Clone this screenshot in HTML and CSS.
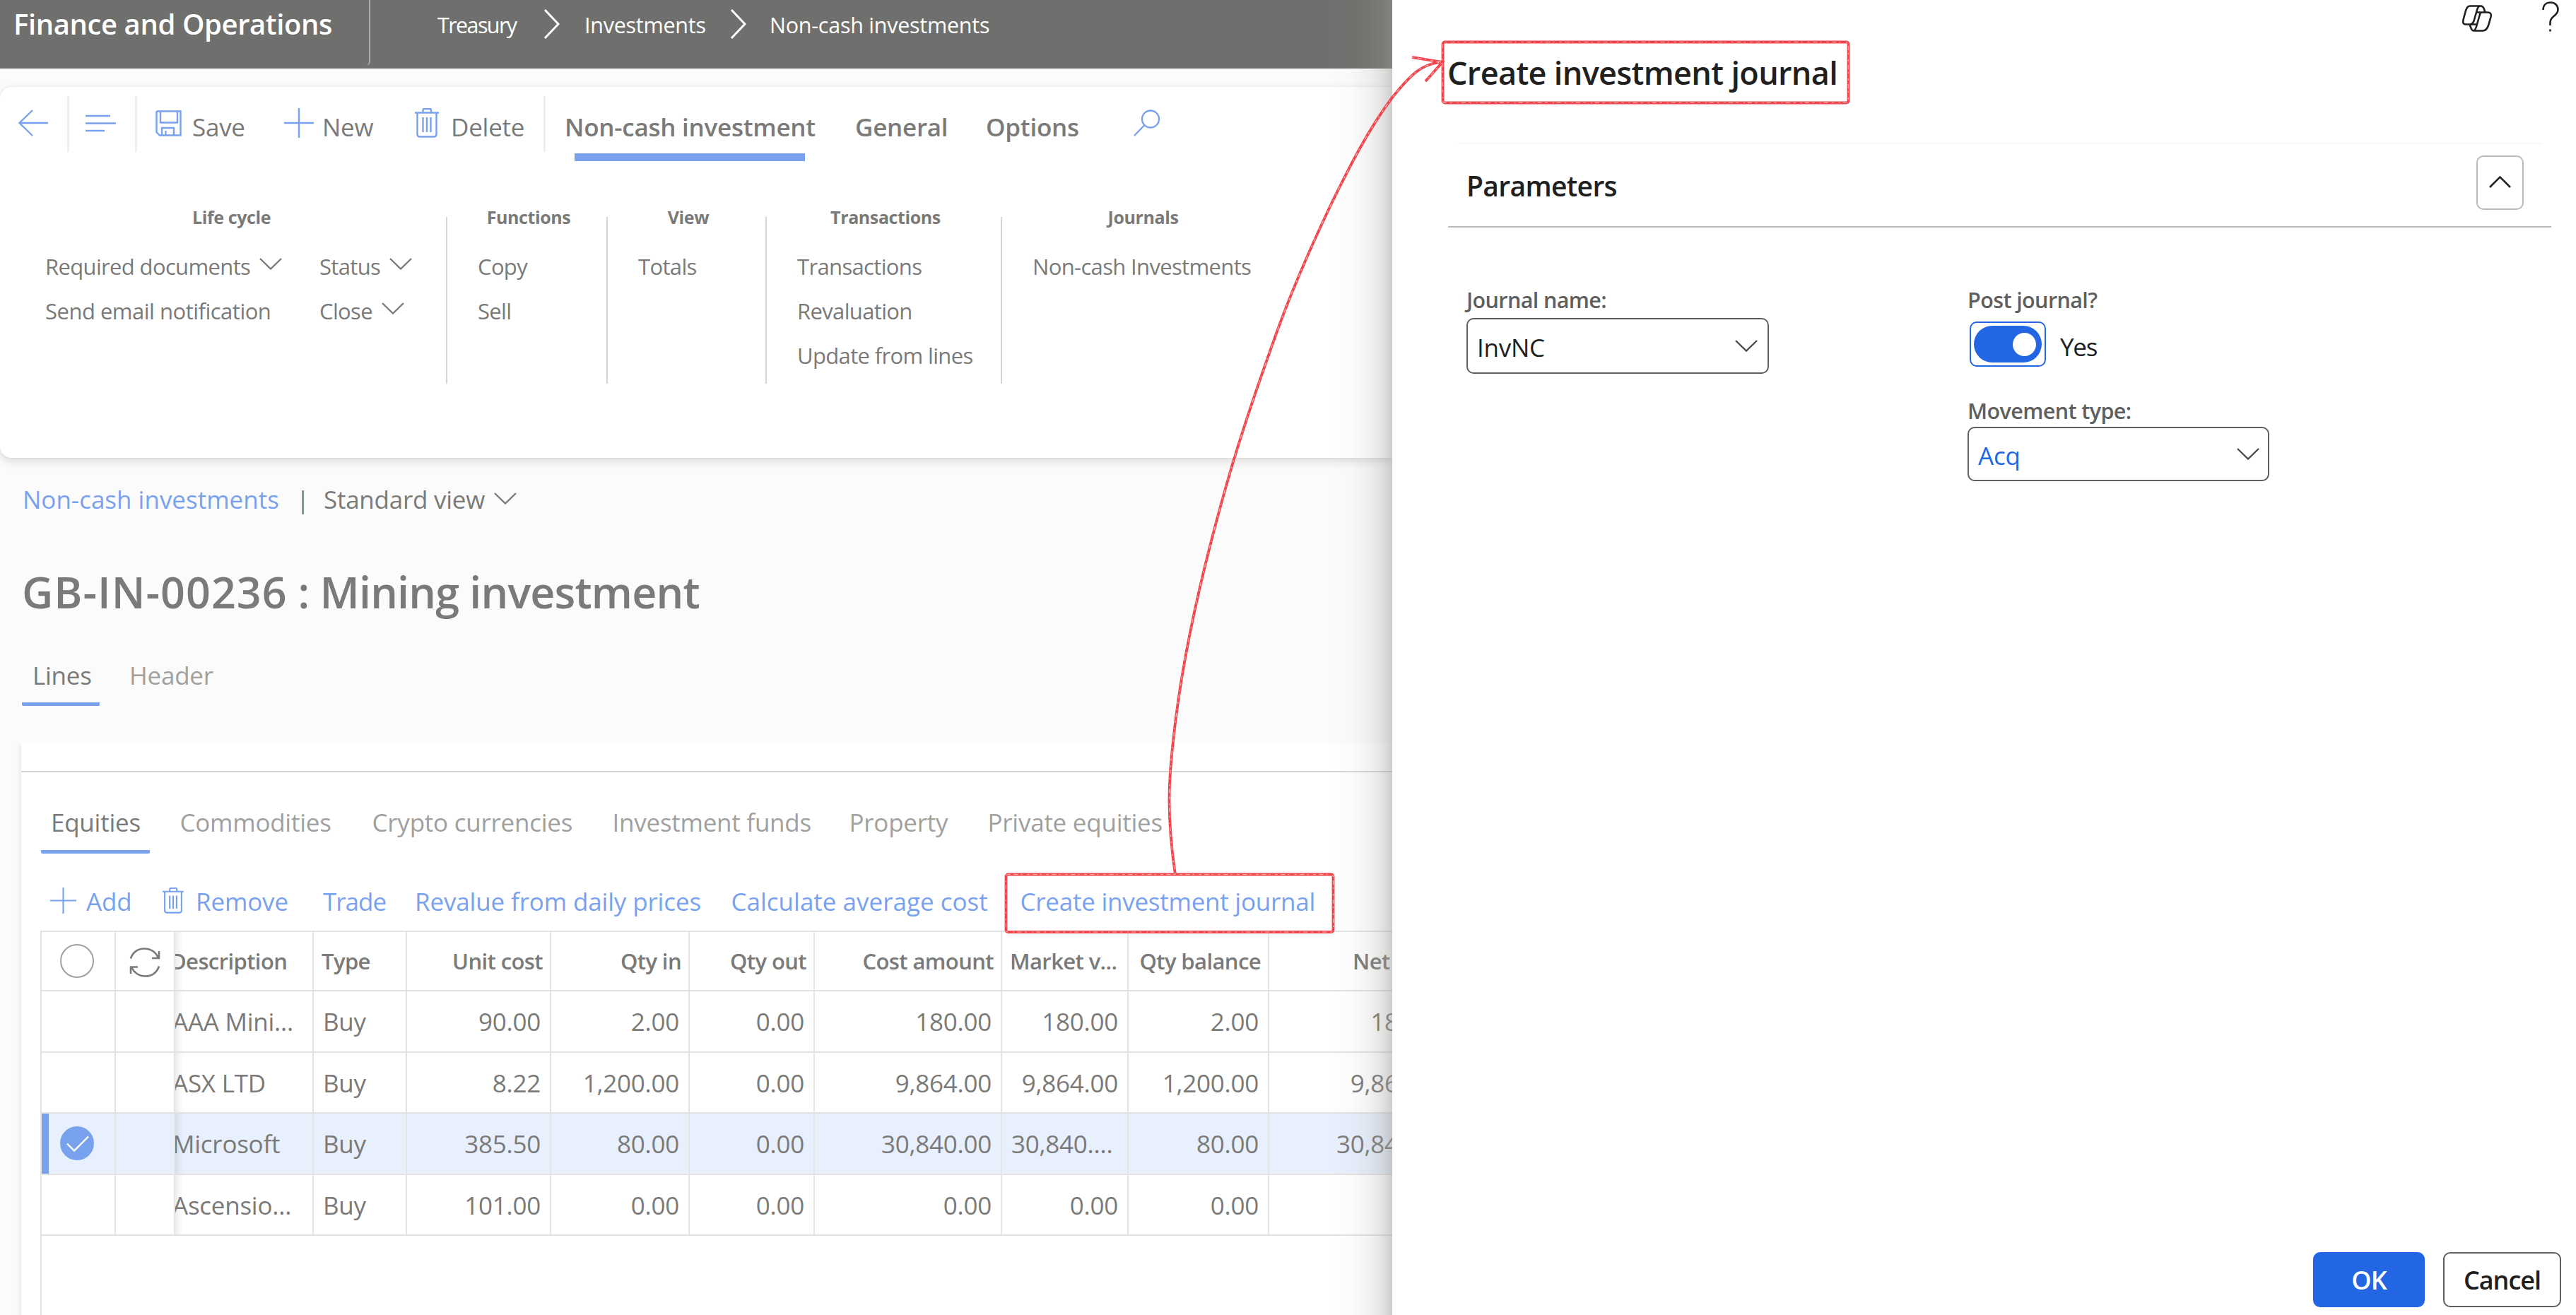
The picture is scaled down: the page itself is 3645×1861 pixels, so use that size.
FILE: index.html
```html
<!DOCTYPE html>
<html lang="en">
<head>
<meta charset="utf-8">
<title>Finance and Operations</title>
<link rel="stylesheet" href="styles.css">
</head>
<body>
<svg class="sprite" width="0" height="0">
  <symbol id="chevron-down" viewBox="0 0 32 17"><path d="M1 1 16 15.500 31 1" /></symbol>
  <symbol id="chevron-right" viewBox="0 0 23 42"><path d="M2 1 21 21 2 41" /></symbol>
  <symbol id="plus" viewBox="0 0 42 42"><path d="M21 0V42M0 21H42" /></symbol>
  <symbol id="trash" viewBox="0 0 34 42"><path d="M0 6.500H34M3.500 7V37q0 3.500 3.500 3.500H27q3.500 0 3.500-3.500V7M11.500 6V3q0-2 2-2H21q2 0 2 2V6M11.500 13V34M17 13V34M22.500 13V34" /></symbol>
</svg>

<div class="screen">
  <main class="app">
    <header class="topbar">
      <div class="brand">Finance and Operations</div>
      <nav class="crumbs">
        <span class="tight">Treasury</span>
        <svg class="icon crumb-arrow"><use href="#chevron-right"/></svg>
        <span>Investments</span>
        <svg class="icon crumb-arrow"><use href="#chevron-right"/></svg>
        <span>Non-cash investments</span>
      </nav>
    </header>

    <section class="ribbon">
      <div class="toolbar">
        <div class="tool back"><svg class="icon blue" width="42" height="38" viewBox="0 0 42 38"><path d="M1 19H42M20 1 1.500 19 20 37"/></svg></div>
        <div class="tool menu"><svg class="icon blue" width="43" height="25" viewBox="0 0 43 25"><path d="M0 2H35M0 12.500H43M0 23H27"/></svg></div>
        <div class="tool save"><svg class="icon blue" width="37" height="37" viewBox="0 0 37 37"><path d="M3 1.500H35.500V35.500H6L1.500 31V3Q1.500 1.500 3 1.500ZM7 2V17.500H31V2M9 35V25H26V35M14.500 29V35"/></svg><span>Save</span></div>
        <div class="tool new"><svg class="icon blue" width="42" height="42"><use href="#plus"/></svg><span>New</span></div>
        <div class="tool delete"><svg class="icon blue" width="34" height="42"><use href="#trash"/></svg><span>Delete</span></div>
        <div class="tool rule"></div>
        <div class="tool tab active"><span>Non-cash investment</span></div>
        <div class="tool tab"><span>General</span></div>
        <div class="tool tab"><span>Options</span></div>
        <div class="tool"><svg class="icon blue" width="38" height="38" viewBox="0 0 38 38"><circle cx="24" cy="13.500" r="12"/><path d="M15.500 22 1 37"/></svg></div>
      </div>
      <div class="groups">
        <div class="group lifecycle">
          <h3>Life cycle</h3>
          <div class="pair">
            <a>Required documents<svg class="icon chev"><use href="#chevron-down"/></svg></a>
            <a>Status<svg class="icon chev"><use href="#chevron-down"/></svg></a>
            <a class="wide">Send email notification</a>
            <a>Close<svg class="icon chev"><use href="#chevron-down"/></svg></a>
          </div>
        </div>
        <div class="group"><h3>Functions</h3><a>Copy</a><a>Sell</a></div>
        <div class="group"><h3>View</h3><a>Totals</a></div>
        <div class="group"><h3>Transactions</h3><a>Transactions</a><a>Revaluation</a><a>Update from lines</a></div>
        <div class="group journals"><h3>Journals</h3><a>Non-cash Investments</a></div>
      </div>
    </section>

    <div class="viewbar">
      <a class="link">Non-cash investments</a><span>|</span>
      <span class="view">Standard view<svg class="icon chev"><use href="#chevron-down"/></svg></span>
    </div>
    <h1><span class="code">GB-IN-00236</span> : Mining investment</h1>
    <nav class="tabs page-tabs"><a class="active">Lines</a><a>Header</a></nav>

    <section class="card">
      <div class="card-head"></div>
      <nav class="tabs line-tabs">
        <a class="active">Equities</a><a>Commodities</a><a>Crypto currencies</a><a>Investment funds</a><a>Property</a><a>Private equities</a>
      </nav>
      <div class="actions">
        <a><svg class="icon blue" width="37" height="37"><use href="#plus"/></svg>Add</a>
        <a class="remove"><svg class="icon blue" width="30" height="37"><use href="#trash"/></svg>Remove</a>
        <a class="trade">Trade</a>
        <a>Revalue from daily prices</a>
        <a class="average">Calculate average cost</a>
        <a class="journal">Create investment journal</a>
      </div>
      <div class="grid">
        <div class="row head">
          <div class="mark"><i class="ring"></i></div>
          <div class="mark"><svg class="icon refresh" width="42" height="42" viewBox="0 0 42 42"><path d="M1 15.500C4 6 12 1.500 20 1.500 29 1.500 36 6 40 14.500M41 5V15H31M41 26.500C38 36 30 40.500 22 40.500 13 40.500 6 36 2 27.500M1 37V27.500H11"/></svg></div>
          <div class="desc">Description</div><div>Type</div><div class="n">Unit cost</div><div class="n">Qty in</div><div class="n">Qty out</div><div class="n">Cost amount</div><div class="cut">Market v...</div><div class="n">Qty balance</div><div class="net">Net</div>
        </div>
        <div class="row"><div></div><div></div><div class="desc">AAA Mini...</div><div>Buy</div><div class="n">90.00</div><div class="n">2.00</div><div class="n">0.00</div><div class="n">180.00</div><div class="n">180.00</div><div class="n">2.00</div><div class="n">180.00</div></div>
        <div class="row"><div></div><div></div><div class="desc">ASX LTD</div><div>Buy</div><div class="n">8.22</div><div class="n">1,200.00</div><div class="n">0.00</div><div class="n">9,864.00</div><div class="n">9,864.00</div><div class="n">1,200.00</div><div class="n">9,864.00</div></div>
        <div class="row selected"><div class="mark"><svg width="48" height="48" viewBox="0 0 48 48"><circle class="disc" cx="24" cy="24" r="24"/><path class="tick" d="M10 24.500 20 34.500 40 14.500"/></svg></div><div></div><div class="desc">Microsoft</div><div>Buy</div><div class="n">385.50</div><div class="n">80.00</div><div class="n">0.00</div><div class="n">30,840.00</div><div class="cut">30,840....</div><div class="n">80.00</div><div class="n">30,840.00</div></div>
        <div class="row"><div></div><div></div><div class="desc">Ascensio...</div><div>Buy</div><div class="n">101.00</div><div class="n">0.00</div><div class="n">0.00</div><div class="n">0.00</div><div class="n">0.00</div><div class="n">0.00</div><div></div></div>
      </div>
    </section>
    <div class="edge-shade"></div>
  </main>

  <aside class="panel">
    <div class="panel-icons">
      <svg class="icon ink" width="42" height="38" viewBox="0 0 42 38"><path d="M11 1.500H26Q29.500 1.500 31 6L32.500 10.500H36Q42 10.500 40.500 17L37 29Q34.500 36.500 29 36.500H17Q13.500 36.500 12.500 33L10.500 27.500H5Q0 27.500 1.500 21L5 8Q7 1.500 11 1.500ZM26 1.500Q22.500 1.500 21 7L17 21Q15.500 27.500 10.500 27.500M32.500 10.500H28Q25.500 10.500 24.500 15L20.500 29Q18.500 36.500 15.500 36.500M21 10.500H28M10.500 27.500H20"/></svg>
      <svg class="icon ink" width="24" height="43" viewBox="0 0 24 43"><path d="M1.500 12C1.500 5 6 1.500 12 1.500S22.500 5.500 22.500 11.500C22.500 21 11.500 20 11.500 30V34M11.500 39.500V42.500"/></svg>
    </div>
    <h2>Create investment journal</h2>
    <div class="section-edge"></div>
    <div class="section-head">
      <span>Parameters</span>
      <button class="collapse"><svg class="icon ink" width="31" height="17" viewBox="0 0 31 17"><path d="M1 16 15.500 1.500 30 16"/></svg></button>
    </div>
    <div class="fields">
      <div>
        <label>Journal name:</label>
        <div class="input">InvNC<svg class="icon chev"><use href="#chevron-down"/></svg></div>
      </div>
      <div>
        <label>Post journal?</label>
        <div class="toggle-row"><div class="toggle"><div class="track"><i></i></div></div><span>Yes</span></div>
        <label>Movement type:</label>
        <div class="input movement">Acq<svg class="icon chev"><use href="#chevron-down"/></svg></div>
      </div>
    </div>
    <footer><button class="ok">OK</button><button class="cancel">Cancel</button></footer>
  </aside>

  <svg class="markup" width="3645" height="1861" viewBox="0 0 3645 1861">
    <g id="strokes">
      <rect x="1423.500" y="1237.500" width="463" height="81.500" rx="3"/>
      <rect x="2041.500" y="59.500" width="574" height="86" rx="3"/>
      <path d="M1663 1238C1650 1150 1654 1100 1661 1040C1674 920 1705 790 1743 660C1762 597 1785 530 1807 469C1830 405 1857 345 1883 290C1910 235 1935 185 1970 138C1995 107 2012 89 2041 88M1998 81 2041 88 2017 115"/>
    </g>
    <use class="grain" href="#strokes"/>
  </svg>
</div>
</body>
</html>
```
FILE: styles.css
```css
* { box-sizing: border-box; }
body { margin: 0; background: #fff; font-family: "Open Sans", "Noto Sans", sans-serif; font-size: 35px; letter-spacing: -0.25px; color: #7a7a78; }
h1, h2, h3 { margin: 0; font-weight: 600; }
button { font: inherit; letter-spacing: inherit; padding: 0; }
.sprite { display: block; width: 0; height: 0; }

.icon { fill: none; stroke: currentColor; stroke-width: 2.4; flex: none; overflow: visible; }
.blue { color: #79a2ee; }
.ink { color: #20201f; stroke-width: 2.6; }
.chev { width: 32px; height: 17px; margin-left: 14px; }

.screen { position: relative; display: flex; width: 3645px; height: 1861px; overflow: hidden; }

/* workspace */
.app { position: relative; width: 1970px; height: 1861px; background: #fbfbfb; overflow: hidden; white-space: nowrap; }
.edge-shade { position: absolute; top: 0; right: 0; width: 90px; height: 100%; background: linear-gradient(to right, rgba(153,151,147,0), rgba(153,151,147,.03) 35%, rgba(153,151,147,.13) 65%, rgba(153,151,147,.29) 86%, rgba(153,151,147,.48)); }

.topbar { display: flex; height: 97px; background: #6f706d; color: #fff; }
.brand { width: 524px; height: 93px; padding-left: 19px; border-right: 2px solid #a9a9a7; border-bottom-right-radius: 6px; font-size: 40px; font-weight: 600; line-height: 68px; letter-spacing: -.4px; }
.crumbs { display: grid; grid-template-columns: 150px 58px 206px 56px auto; padding-left: 95px; font-size: 30.5px; line-height: 71px; }
.crumbs .tight { letter-spacing: -1.6px; }
.crumb-arrow { width: 23px; height: 42px; margin-top: 13px; stroke-width: 3; }

.ribbon { height: 525px; margin-top: 26px; background: #fff; border-radius: 16px 0 0 16px; box-shadow: 0 5px 14px rgba(0,0,0,.13), 0 0 3px rgba(0,0,0,.08); }
.toolbar { display: grid; grid-template-columns: 95px 96px 211px 185px 182px 30px 411px 185px 209px auto; height: 113px; padding-top: 13px; }
.tool { display: flex; align-items: center; height: 79px; padding-bottom: 3px; }
.tool span { padding-top: 11px; }
.tool.back { padding-left: 26px; }
.tool.menu { padding-left: 23px; border-left: 3px solid #eee; }
.tool.save { padding-left: 26px; border-left: 3px solid #eee; gap: 15px; }
.tool.new { gap: 12px; }
.tool.delete { gap: 17px; }
.tool.rule { border-left: 3px solid #eee; }
.tool.tab { position: relative; font-weight: 600; }
.tool.tab.active::after { content: ""; position: absolute; left: 14px; top: 81px; width: 326px; height: 11px; background: #79a2ee; }

.groups { display: grid; grid-template-columns: 631px 227px 225px 333px 400px; height: 236px; margin-top: 71px; font-size: 31px; letter-spacing: -.65px; }
.group { padding-left: 43px; border-left: 2px solid #d6d6d6; }
.group a { display: flex; align-items: center; height: 62.8px; }
.group h3 { margin: -18px 0 21px -38px; font-size: 25px; font-weight: 700; line-height: 36px; letter-spacing: -.4px; text-align: center; }
.lifecycle { padding-left: 64px; border-left: 0; }
.lifecycle h3 { margin-left: -40px; }
.journals h3 { margin-left: -42px; }
.pair { display: grid; grid-template-columns: 388px auto; }
.pair .chev { margin: 0 0 7px 13px; }
.pair .wide { letter-spacing: -.5px; }

.viewbar { display: grid; grid-template-columns: 387px 39px auto; margin-top: 28px; padding-left: 32px; line-height: 61px; }
.link { color: #79a2ee; letter-spacing: 0; }
.view { display: flex; align-items: center; }
.view .chev { margin: 0 0 3px 13px; }
h1 { margin-top: 56px; padding-left: 31px; font-size: 61px; line-height: 90px; letter-spacing: -.8px; }
h1 .code { letter-spacing: 1px; }
.tabs { display: grid; line-height: 61px; color: #a0a09e; }
.tabs a { height: 74px; padding-left: 15px; }
.tabs .active { color: #7a7a78; border-bottom: 5px solid #79a2ee; border-radius: 2px; }
.page-tabs { grid-template-columns: 110px auto; column-gap: 27px; margin-top: 42px; padding-left: 31px; }

.card { height: 809px; margin: 53px 0 0 30px; background: #fff; box-shadow: -3px 2px 6px rgba(0,0,0,.07); clip-path: inset(0 0 0 -12px); }
.card-head { height: 41px; border-bottom: 2px solid #d6d6d6; }
.line-tabs { grid-template-columns: 181.5px 272px 340px 335px 196px auto; padding: 40px 0 0 28px; }
.line-tabs .active { width: 154px; height: 75px; padding-left: 14px; }
.actions { display: grid; grid-template-columns: 160px 226px 129px 447.5px 409px auto; height: 60px; margin-top: 37px; padding-left: 41px; line-height: 60px; color: #79a2ee; letter-spacing: -.15px; }
.actions a { display: flex; align-items: center; gap: 14px; padding: 1px 0 0 1px; }
.actions .remove { gap: 17px; padding-left: 0; }
.actions .trade { padding-left: 0; letter-spacing: -1px; }
.actions .average { letter-spacing: 0; }
.actions .journal { letter-spacing: -.25px; }
.actions .icon { margin: 0 0 3px -1px; }

.grid { width: 2100px; height: 600px; margin: 12px 0 0 27px; border: 2px solid #e3e3e3; }
.row { display: grid; grid-template-columns: 105px 84px 196px 132px 204px 196px 177px 265px 179px 199px 266px; height: 86.5px; line-height: 86px; border-bottom: 2px solid #e1e1e1; }
.row > div { height: 84.5px; padding: 0 13px; border-right: 2px solid #e5e5e5; overflow: hidden; }
.row > .n { text-align: right; }
.row > .cut { padding: 0 0 0 13px; }
.row > .desc { padding: 0; text-indent: -4px; background: linear-gradient(to right, rgba(0,0,0,.07), transparent 11px); }
.row > .mark { display: flex; align-items: center; justify-content: center; padding: 0 3px 0 0; }
.head { height: 84px; line-height: 82px; font-size: 31px; font-weight: 600; letter-spacing: -.6px; }
.head > div { height: 82px; padding: 0 10px 0 11px; }
.head > .cut { padding-left: 11px; }
.head > .desc { text-indent: -7px; }
.head > .net { padding: 0 0 0 118px; }
.ring { width: 48px; height: 48px; border: 2px solid #a0a09e; border-radius: 50%; }
.refresh { margin: 4px 0 0 3px; stroke-width: 2.6; }
.selected { background: #e8effd; box-shadow: inset 10px 0 #79a2ee; }
.disc { fill: #79a2ee; }
.tick { fill: none; stroke: #fff; stroke-width: 2.4; }

/* dialog */
.panel { display: flex; flex-direction: column; width: 1675px; height: 1861px; background: #fff; color: #20201f; }
.panel-icons { display: flex; justify-content: flex-end; align-items: flex-start; gap: 71px; height: 46px; padding: 2px 24px 0 0; }
.panel-icons svg:first-child { margin-top: 5px; }
.panel h2 { margin-top: 17px; padding-left: 78px; font-size: 45px; line-height: 80px; letter-spacing: -.65px; }
.section-edge { height: 2px; margin: 59px 48px 0 93px; background: #f7f7f7; }
.section-head { display: flex; align-items: center; justify-content: space-between; height: 118px; margin: 0 35px 0 79px; padding: 0 39px 0 26px; border-bottom: 2px solid #b9b9b9; font-size: 39px; font-weight: 600; letter-spacing: -.65px; }
.collapse { display: flex; align-items: center; justify-content: center; width: 67px; height: 77px; margin-bottom: 7px; background: #fff; border: 2px solid #bdbab6; border-radius: 10px; }
.collapse .icon { margin-bottom: 3px; }
.fields { display: grid; grid-template-columns: 709px 425px; margin: 80px 0 0 105px; }
label { display: block; font-size: 30.5px; font-weight: 600; line-height: 44px; letter-spacing: -.6px; color: #5f5f5f; }
.input { display: flex; align-items: center; justify-content: space-between; width: 428px; height: 79px; margin-top: 4px; padding: 3px 14px 0 13px; border: 2px solid #5f5f5f; border-radius: 10px; }
.input .chev { margin-bottom: 4px; color: #4a4a4a; }
.movement { width: 427px; height: 77px; margin-top: 1px; padding-right: 12px; color: #2266e3; }
.toggle-row { display: flex; height: 104px; margin: 9px 0 0 3px; gap: 20px; }
.toggle { width: 108px; height: 64px; padding: 4px; border: 2px solid #2266e3; border-radius: 10px; }
.track { display: flex; align-items: center; justify-content: flex-end; height: 52px; padding-right: 8px; background: #2266e3; border-radius: 26px; }
.track i { width: 33px; height: 33px; background: #fff; border-radius: 50%; }
.toggle-row span { line-height: 72px; letter-spacing: -1.2px; }
footer { display: flex; justify-content: flex-end; gap: 26px; margin: auto 21px 11px 0; font-size: 36px; font-weight: 600; letter-spacing: -1px; }
footer button { height: 78px; border-radius: 10px; }
.ok { width: 158px; border: 0; background: #2266e3; color: #fff; }
.cancel { width: 167px; border: 2px solid #5f5f5f; background: #fff; color: #20201f; }

/* red call-out drawn over both halves */
.markup { position: absolute; left: 0; top: 0; fill: none; stroke: #f0454d; stroke-width: 3.8; pointer-events: none; }
.grain { stroke: #fbb0b2; stroke-width: 1.2; stroke-dasharray: 3 5 6 4 2 7; }
```
